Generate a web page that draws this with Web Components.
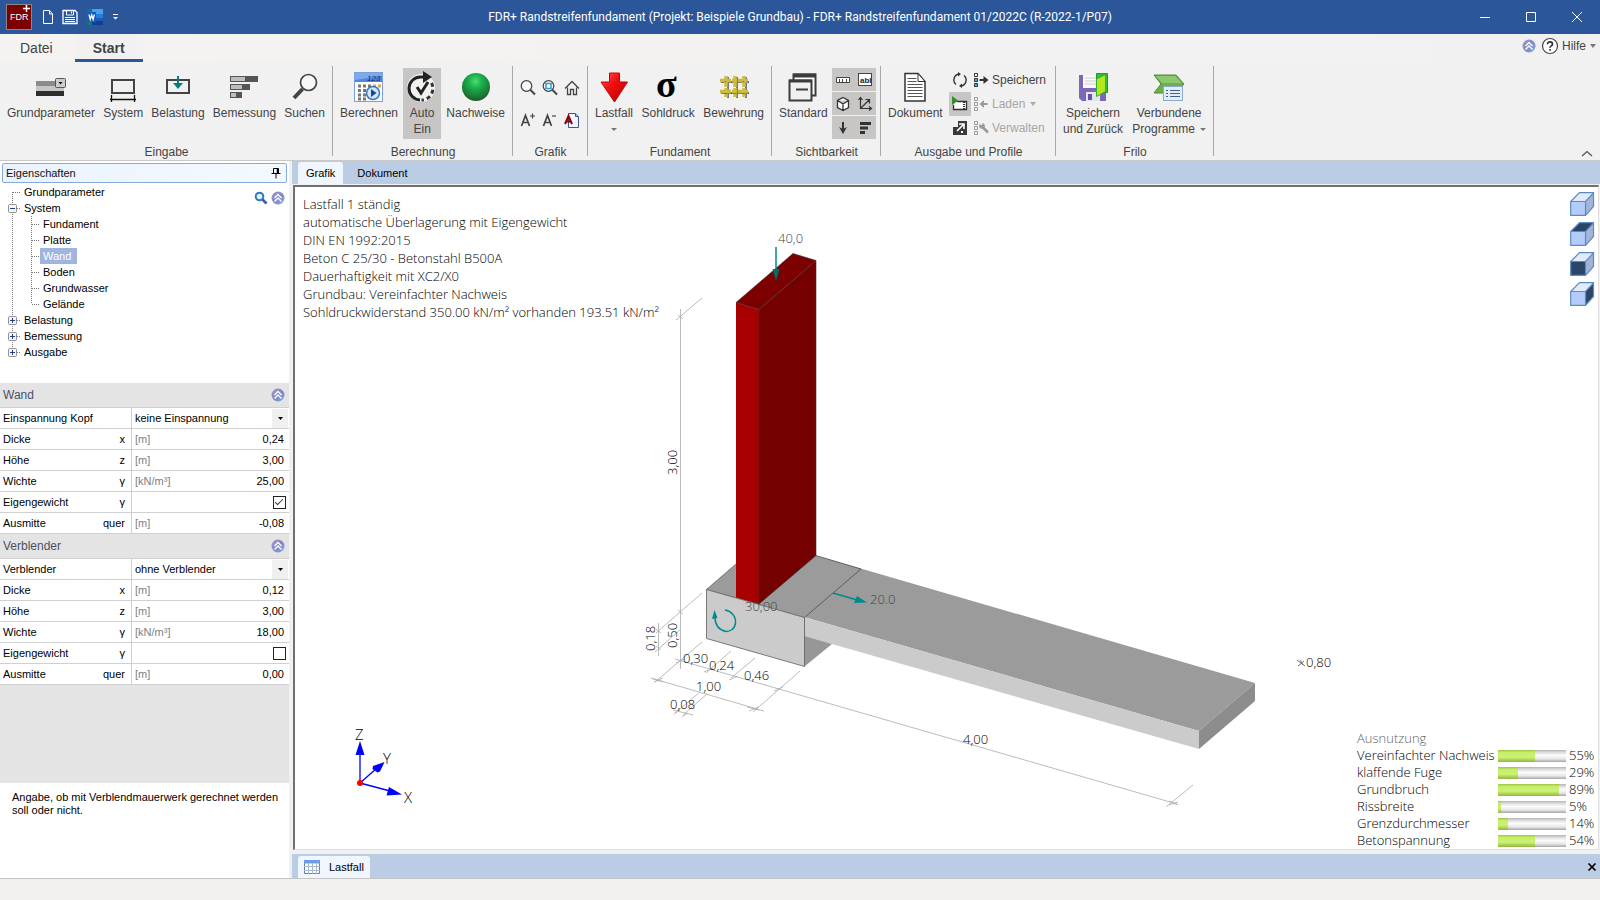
<!DOCTYPE html>
<html lang="de">
<head>
<meta charset="utf-8">
<title>FDR+ Randstreifenfundament</title>
<style>
html, body { height: 100%; margin: 0; }
body { font-family: "Liberation Sans", Arial, sans-serif; font-size: 12px; color: #444; background: #f1f1f1; overflow: hidden; }
</style>
</head>
<body>
<fdr-app></fdr-app>

<script>
// [width, height, markup] of every icon
const ICONS = {
  logo: [26, 26, `<rect x="0.5" y="0.5" width="25" height="25" fill="#7d0000" stroke="#8d8585"/>
    <text x="4" y="16" font-family="Liberation Sans, sans-serif" font-size="9" fill="#fff">FDR</text>
    <path d="M17 4.500h7M20.500 1v7" stroke="#fff" stroke-width="1.500"/>`],
  'new': [12, 16, `<path d="M1.500 1.500h6l3 3.500v9.500h-9zM7.500 1.500v3.500h3" fill="none" stroke="#fff"/>`],
  save: [16, 16, `<path d="M1 1.500h12l2 2v11H1z" fill="none" stroke="#fff" stroke-width="1.300"/><path d="M4.500 2v4h7V2M9.500 2.500v2M3 8.500h10M3 10.500h10M3 12.500h10" fill="none" stroke="#fff"/>`],
  word: [18, 16, `<path d="M5 0h12v5H5z" fill="#41a5ee"/><path d="M5 5h12v4H5z" fill="#2b7cd3"/><path d="M5 9h12v3H5z" fill="#185abd"/><path d="M5 12h12v4H5z" fill="#103f91"/>
    <path d="M1 0h5v3H1zM1 13h5v3H1z" fill="#008080"/><path d="M1 3h9v10H1z" fill="#185abd"/><path d="M3 5.500l1.300 5 1.400-4.500 1.400 4.500 1.300-5" fill="none" stroke="#fff" stroke-width="1.300"/>`],
  customize: [8, 8, `<path d="M1 1.500h5" stroke="#fff"/><path d="M1 4h5L3.500 6.500z" fill="#fff"/>`],
  min: [12, 12, `<path d="M1 6.500h10" stroke="#fff"/>`],
  max: [12, 12, `<path d="M1.500 1.500h9v9h-9z" fill="none" stroke="#fff"/>`],
  close: [12, 12, `<path d="M1 1l10 10M11 1L1 11" stroke="#fff"/>`],
  collapse: [14, 14, `<defs><linearGradient id="g" x2="1" y2="1"><stop offset="0" stop-color="#a39ad0"/><stop offset=".5" stop-color="#8785c4"/><stop offset="1" stop-color="#6fb1e6"/></linearGradient></defs>
    <circle cx="7" cy="7" r="6.500" fill="url(#g)"/><path d="M3.500 7L7 3.500 10.500 7M3.500 10.500L7 7l3.500 3.500" fill="none" stroke="#fff" stroke-width="1.300"/>`],
  help: [18, 18, `<circle cx="9" cy="9" r="7.500" fill="#fff" stroke="#444" stroke-width="1.200"/><path d="M6.500 7.200c0-3.200 5-3 5 0 0 1.700-2.500 1.700-2.500 3.500" fill="none" stroke="#333" stroke-width="1.700"/><rect x="8.200" y="12" width="1.700" height="1.700" fill="#333"/>`],
  up: [12, 8, `<path d="M1 6l5-4.500L11 6" fill="none" stroke="#555" stroke-width="1.300"/>`],
  params: [32, 32, `<path d="M1 10h28v5H1z" fill="#8c8c8c"/><path d="M1 15h28v5H1z" fill="#c6c6c6"/><path d="M1 20h28v5H1z" fill="#2e2e2e"/><rect x="20.500" y="7.500" width="10" height="9" rx="1" fill="#ccc" stroke="#555"/><path d="M23.500 11h4l-2 2.500z" fill="#111"/>`],
  system: [32, 32, `<path d="M5 9h22v13H5z" fill="none" stroke="#444" stroke-width="2"/><path d="M3 28.500h26M4.500 24v7M27.500 24v7" stroke="#111" stroke-width="1.300"/>`],
  load: [32, 32, `<path d="M5 9h22v13H5z" fill="none" stroke="#444" stroke-width="2"/><path d="M16 5v8" stroke="#008080" stroke-width="2"/><path d="M11 12h10l-5 6z" fill="#008080"/>`],
  design: [32, 32, `<path d="M2 5h28v6H2zM2 13h20v6H2zM2 21h12v6H2z" fill="#555"/><path d="M3 6h14v4H3zM3 14h11v4H3zM3 22h5v4H3z" fill="#bdbdbd"/>`],
  search: [32, 32, `<circle cx="19.500" cy="11.500" r="8" fill="#fff" fill-opacity=".5" stroke="#444" stroke-width="1.700"/><path d="M13.500 18L5 27" stroke="#444" stroke-width="4"/>`],
  calc: [32, 32, `<rect x="1.500" y="1.500" width="28" height="29" fill="#fff" stroke="#7ca0dd"/><path d="M2 2h27v9H2z" fill="#4d86dc"/><path d="M2 2h27v3L2 9z" fill="#7caaf0"/>
    <text x="14" y="10" font-family="Liberation Sans, sans-serif" font-size="8" font-style="italic" fill="#152d66">123</text>
    <path d="M5 15h15M5 19.500h15M5 24h10M5 28h10" stroke="#777" stroke-width="3" stroke-dasharray="3 2"/><path d="M20 15h8" stroke="#eda04b" stroke-width="3" stroke-dasharray="3 2"/>
    <circle cx="20" cy="22" r="6.500" fill="#cfe6fb" stroke="#3d78b8" stroke-width="1.500"/><path d="M18 18l5.500 4-5.500 4z" fill="#174a8c"/>`],
  auto: [32, 32, `<circle cx="15" cy="17" r="14" fill="#fff" fill-opacity=".75"/><path d="M14 29A11.500 11.500 0 0 1 15 6h4" fill="none" stroke="#222" stroke-width="3"/><path d="M17 0l9 6-9 6z" fill="#222"/><path d="M25.500 12a11.500 11.500 0 0 1-10 17" fill="none" stroke="#333" stroke-width="3" stroke-dasharray="4 3"/><path d="M11 16l4 6 7-11" fill="none" stroke="#222" stroke-width="3"/>`],
  ball: [32, 32, `<defs><radialGradient id="b" cx=".48" cy=".3" r=".7"><stop offset="0" stop-color="#4fdc6c"/><stop offset=".35" stop-color="#18b14c"/><stop offset=".75" stop-color="#1c7e35"/><stop offset="1" stop-color="#205a2d"/></radialGradient></defs><circle cx="16" cy="16" r="14" fill="url(#b)"/>`],
  zoom: [18, 18, `<circle cx="7.500" cy="7" r="5.300" fill="#fff" fill-opacity=".5" stroke="#444" stroke-width="1.200"/><path d="M11.500 11l4.500 4.500" stroke="#444" stroke-width="2"/>`],
  zoomwin: [18, 18, `<circle cx="7.500" cy="7" r="5.300" fill="#fff" fill-opacity=".5" stroke="#444" stroke-width="1.200"/><path d="M11.500 11l4.500 4.500" stroke="#444" stroke-width="2"/><rect x="5" y="4.500" width="5" height="5" fill="#fff" stroke="#2d9be0" stroke-width="1.500"/>`],
  home: [18, 18, `<path d="M2 9.500L9 2.500l7 7M4.500 8.500v7h3v-5h3v5h3v-7" fill="none" stroke="#444" stroke-width="1.300"/>`],
  fontup: [18, 18, `<path d="M2.500 15L6.500 4.500 10.500 15M4 11.500h5" fill="none" stroke="#444" stroke-width="1.700"/><path d="M11 5h5M13.500 2.500v5" stroke="#444" stroke-width="1.200"/>`],
  fontdown: [18, 18, `<path d="M2.500 15L6.500 4.500 10.500 15M4 11.500h5" fill="none" stroke="#444" stroke-width="1.700"/><path d="M11 5h4" stroke="#444" stroke-width="1.200"/>`],
  fontpage: [18, 18, `<path d="M5.500 2.500h7l3 3v11h-10z" fill="#f2f5fd" stroke="#3b5597"/><path d="M12.500 2.500v3h3" fill="#b9c8ef" stroke="#3b5597"/><path d="M2 13L5.500 5 9 13M3 10.500h5" fill="none" stroke="#900000" stroke-width="2"/>`],
  lastfall: [32, 32, `<defs><linearGradient id="r" x2="1" y2="1"><stop offset="0" stop-color="#ff6060"/><stop offset=".4" stop-color="#f01010"/><stop offset="1" stop-color="#b80000"/></linearGradient></defs><path d="M11.500 2h10v9h8L16.500 31 3 11h8.500z" fill="url(#r)" stroke="#c00"/>`],
  sigma: [32, 32, `<text x="4" y="26" font-family="Liberation Serif, serif" font-size="38" font-weight="bold" fill="#000">σ</text>`],
  rebar: [32, 32, `<path d="M3 11h28M3 22h28" stroke="#6a6a80" stroke-width="2"/><path d="M10 6v21M19 6v21M28 6v21" stroke="#77778a" stroke-width="2"/><path d="M2 9.500h28M2 20.500h28" stroke="#c9b93d" stroke-width="3.500" stroke-dasharray="5 1"/><path d="M8 5v21M17 5v21M26 5v21" stroke="#cdbd45" stroke-width="3.500" stroke-dasharray="5 1"/>`],
  standard: [32, 32, `<path d="M6.500 3.500h22v21h-22z" fill="#fff" stroke="#3c3c3c" stroke-width="2"/><path d="M6 4.500h23" stroke="#3c3c3c" stroke-width="4"/><path d="M2.500 9.500h22v20h-22z" fill="#f1f1f1" stroke="#3c3c3c" stroke-width="2"/><path d="M2 10h23" stroke="#3c3c3c" stroke-width="3"/><path d="M9 18.500h12" stroke="#3c3c3c" stroke-width="2"/>`],
  ruler: [16, 16, `<path d="M1.500 5.500h13v5h-13z" fill="#fff" stroke="#444"/><path d="M4.500 7v3.500M7.500 7v3.500M11.500 7v3.500" stroke="#444"/>`],
  abl: [16, 16, `<rect x="1.500" y="1.500" width="13" height="12" fill="#fff" stroke="#444"/><text x="3" y="11" font-family="Liberation Sans, sans-serif" font-size="8" font-weight="bold" fill="#222">abl</text>`],
  box: [16, 16, `<path d="M8 1.500l5.500 3v7L8 14.500l-5.500-3v-7zM2.500 4.500L8 8l5.500-3.500M8 8v6.500" fill="#fff" stroke="#333" stroke-width="1.300"/>`],
  axes: [16, 16, `<path d="M3.500 2v10.500H14M3.500 12.500L12 4M1.500 4l2-2.500 2 2.500M12 10.500l2.500 2-2.500 2M8.500 3.500H12.500V7.500" fill="none" stroke="#333" stroke-width="1.200"/>`],
  down: [16, 16, `<path d="M8 2v7" stroke="#333" stroke-width="2"/><path d="M4 7l4 2 4-2-4 7z" fill="#333"/>`],
  bars: [16, 16, `<path d="M3 2h11v3H3zM3 6.500h8v3H3zM3 11h5v3H3z" fill="#333"/>`],
  doc: [32, 32, `<path d="M6 2.500h13l7 8v19.500H6z" fill="#fff" stroke="#333" stroke-width="1.500"/><path d="M19 2.500v8h7z" fill="#fff" stroke="#333"/><path d="M8.500 7.500h9M8.500 10.500h9M8.500 13.500h15M8.500 16.500h15M8.500 19.500h15M8.500 22.500h15M8.500 25.500h15" stroke="#555" stroke-width="1.200"/>`],
  refresh: [16, 16, `<path d="M7 2A6 6 0 0 0 4 12.500M9 14a6 6 0 0 0 3-10.500" fill="none" stroke="#333" stroke-width="1.400"/><path d="M6 0l3 2-3 2.500zM10 16l-3-2 3-2.500z" fill="#333"/>`],
  film: [18, 16, `<path d="M6 5.500h9.500v8h-13V9" fill="#fff" stroke="#333" stroke-width="1.300"/><path d="M13 6v8" stroke="#333" stroke-width="2" stroke-dasharray="1 1"/><path d="M1 0l6 4.500L1 9z" fill="#2f8f2f"/>`],
  expand: [16, 16, `<path d="M1 1h14v14H1z" fill="#3a3a3a"/><path d="M1 1h5v6H1z" fill="#f1f1f1"/><path d="M5 11l6-6M7 4h5v5" fill="none" stroke="#fff" stroke-width="1.600"/><path d="M9 11h2v2H9z" fill="#fff"/>`],
  psave: [16, 16, `<path d="M1.500 1.500h3v3h-3zM1.500 6.500h3v3h-3zM1.500 11.500h3v3h-3z" fill="#4bb0e8" stroke="#333"/><path d="M2 2h2v2H2z" fill="#fff"/><path d="M6.500 8h6" stroke="#333" stroke-width="2"/><path d="M10.500 4l5 4-5 4z" fill="#333"/>`],
  pload: [16, 16, `<path d="M1.500 1.500h3v3h-3zM1.500 6.500h3v3h-3zM1.500 11.500h3v3h-3z" fill="#f4f4f4" stroke="#999"/><path d="M9.500 8h5" stroke="#999" stroke-width="2"/><path d="M11 4L6.500 8l4.500 4z" fill="#999"/>`],
  pmanage: [16, 16, `<path d="M1.500 1.500h3v3h-3zM1.500 6.500h3v3h-3zM1.500 11.500h3v3h-3z" fill="#f4f4f4" stroke="#999"/><path d="M9 6.500l6 6" stroke="#999" stroke-width="2.500"/><circle cx="9" cy="6" r="2.800" fill="#999"/><path d="M6 3.500l3 2 .5-3z" fill="#f1f1f1"/>`],
  saveback: [32, 32, `<path d="M2 4h27v26H5l-3-3z" fill="#7b68b8"/><path d="M6 4h17v13H6z" fill="#fafafa"/><path d="M8 7h13M8 10h13M8 13h13" stroke="#ccc"/><path d="M9 21h14v9H9z" fill="#e4e4ea"/><path d="M11 23h4v6h-4z" fill="#6652a5"/><path d="M19.500 2.500h11v19h-11z" fill="#2fbf3c" stroke="#1c9d2c"/><path d="M19.500 8l9-4.500v17l-9 5z" fill="#b6e61e" stroke="#30b030"/>`],
  linked: [32, 32, `<path d="M1 4h22l8 9-8 9H1l7-9z" fill="#6bb04c" stroke="#4c8a34"/><path d="M3 5h19l7 7H9z" fill="#8cc870"/><rect x="10.500" y="15.500" width="19" height="14" fill="#e3edf9" stroke="#8ba9cc"/><path d="M13 19.500h2M17 19.500h10M13 22.500h2M17 22.500h10M13 25.500h2M17 25.500h10" stroke="#3d5f93"/>`],
  pin: [12, 12, `<path d="M3.500 1.500h5v5h-5zM1.500 6.500h9M6 7v4.500" fill="none" stroke="#000"/><path d="M7.500 1v5" stroke="#000" stroke-width="1.500"/>`],
  find: [14, 14, `<circle cx="5.500" cy="5.500" r="3.800" fill="#e4f1fb" stroke="#2a7cc4" stroke-width="2"/><path d="M8.500 8.500l4 4" stroke="#3760a8" stroke-width="2.600"/>`],
  table: [16, 14, `<path d="M0.500 0.500h15v13h-15z" fill="#fff" stroke="#5b7fae"/><path d="M0 0h16v3.500H0z" fill="#6f9de0"/><path d="M4.500 3v11M8.500 3v11M12.500 3v11M0 6.500h16M0 10.500h16" stroke="#a9b9d0"/>`],
  x: [10, 10, `<path d="M1.500 1.500l7 7M8.500 1.500l-7 7" stroke="#000" stroke-width="1.700"/>`],
};

function cube(top, front, side) {
  return [24, 24, `<path d="M0.700 9.500L9.500 1h14L15.500 9.500z" fill="${top}"/><path d="M0.700 9.500h14.800v13.800H0.700z" fill="${front}"/><path d="M15.500 9.500L23.500 1v13.500l-8 8.800z" fill="${side}"/>
    <path d="M0.700 9.500L9.500 0.700h14v13.800l-8 8.800H0.700zM0.700 9.500h14.800l8-8.500M15.500 9.500v13.800" fill="none" stroke="#5b8ac8" stroke-width="1.200"/>`];
}
ICONS.cube0 = cube('#e3ebfb', '#b4ccfb', '#a4b4d6');
ICONS.cubeTop = cube('#2b4568', '#b4ccfb', '#a4b4d6');
ICONS.cubeFront = cube('#e3ebfb', '#2b4568', '#a4b4d6');
ICONS.cubeSide = cube('#e3ebfb', '#b4ccfb', '#2b4568');

class BaseElement extends HTMLElement {
  constructor() {
    super();
    this.attachShadow({ mode: 'open' });
  }

  attr(name, fallback = '') {
    return this.getAttribute(name) || fallback;
  }

  connectedCallback() {
    this.shadowRoot.innerHTML = this.render();
  }
}

class FdrIcon extends BaseElement {
  render() {
    const [w, h, body] = ICONS[this.attr('name')];
    return `<style>:host { display: inline-flex; flex: none; } svg { display: block; overflow: visible; }</style>
      <svg width="${w}" height="${h}" viewBox="0 0 ${w} ${h}" aria-hidden="true">${body}</svg>`;
  }
}

class TitleBar extends BaseElement {
  render() {
    return `<style>
      :host { display: grid; grid-template-columns: 1fr auto 1fr; align-items: center; height: 34px; background: #2b579a; color: #fff; }
      .quick { display: flex; align-items: center; gap: 8px; padding-left: 6px; }
      .quick fdr-icon[name=logo] { margin-right: 2px; }
      .title { font: 12px Roboto, sans-serif; }
      .window { display: flex; justify-content: flex-end; }
      button { display: flex; align-items: center; justify-content: center; border: 0; padding: 0; background: none; }
      .window button { width: 46px; height: 34px; }
      </style>
      <div class="quick">
        <fdr-icon name="logo"></fdr-icon>
        <button aria-label="Neu"><fdr-icon name="new"></fdr-icon></button>
        <button aria-label="Speichern"><fdr-icon name="save"></fdr-icon></button>
        <button aria-label="Word"><fdr-icon name="word"></fdr-icon></button>
        <button aria-label="Anpassen"><fdr-icon name="customize"></fdr-icon></button>
      </div>
      <div class="title"><slot></slot></div>
      <div class="window">
        <button aria-label="Minimieren"><fdr-icon name="min"></fdr-icon></button>
        <button aria-label="Maximieren"><fdr-icon name="max"></fdr-icon></button>
        <button aria-label="Schließen"><fdr-icon name="close"></fdr-icon></button>
      </div>`;
  }
}

class MenuTabs extends BaseElement {
  render() {
    return `<style>
      :host { display: flex; justify-content: space-between; height: 28px; background: linear-gradient(90deg, #f5f3f1, #f1f1f1 90%); }
      nav, .help { display: flex; }
      nav { padding-left: 12px; gap: 14px; }
      nav button { font: 14px "Liberation Sans", sans-serif; border-bottom: 3px solid transparent; padding: 2px 8px 0; }
      button { color: #444; background: none; border: 0; }
      .active { width: 68px; font-weight: bold; border-color: #2b579a; background: #f1f1f1; }
      .help { align-items: center; align-self: flex-start; height: 24px; gap: 5px; padding-right: 4px; }
      .help button { display: flex; align-items: center; gap: 3px; padding: 0; font: 12px "Liberation Sans", sans-serif; }
      .caret { border: 3px solid transparent; border-top: 4px solid #777; border-bottom: 0; margin-left: 1px; }
      </style>
      <nav><button>Datei</button><button class="active">Start</button></nav>
      <div class="help">
        <button aria-label="Einklappen"><fdr-icon name="collapse"></fdr-icon></button>
        <button><fdr-icon name="help"></fdr-icon>Hilfe<span class="caret"></span></button>
      </div>`;
  }
}

class RibbonGroup extends BaseElement {
  render() {
    return `<style>
      :host { display: flex; flex-direction: column; justify-content: space-between; flex: none; box-sizing: border-box; width: var(--group-width);
        background: linear-gradient(#a8a8a8, #a8a8a8) right 4px / 1px 90px no-repeat; }
      .items { display: flex; justify-content: var(--group-justify, space-between); padding: 6px 8px 0 7px; }
      .caption { text-align: center; line-height: 16px; }
      </style>
      <div class="items"><slot></slot></div>
      <div class="caption">${this.attr('caption')}</div>`;
  }
}

class RibbonButton extends BaseElement {
  render() {
    const lines = this.attr('label').split('|');
    const caret = this.hasAttribute('menu') ? '<i></i>' : '';
    return `<style>
      :host { display: block; }
      button { display: flex; flex-direction: column; align-items: center; height: 71px; padding: 3px 0 0; border: 0; background: none; font: 12px/16px "Liberation Sans", sans-serif; color: #444; white-space: nowrap; }
      button.on { width: 38px; background: #c8c6c4; }
      fdr-icon { margin-bottom: 2px; }
      span { display: flex; align-items: center; gap: 5px; min-height: 16px; }
      i { border: 3px solid transparent; border-top: 3px solid #777; border-bottom: 0; }
      </style>
      <button class="${this.hasAttribute('on') ? 'on' : ''}">
        <fdr-icon name="${this.attr('icon')}"></fdr-icon>
        ${lines.map((line, i) => `<span>${line}${i == lines.length - 1 ? caret : ''}</span>`).join('')}
      </button>`;
  }
}

class IconButton extends BaseElement {
  render() {
    return `<style>
      :host { display: block; }
      button { display: flex; align-items: center; justify-content: center; width: 22px; height: var(--icon-button-height, 24px); padding: 0; border: 0; background: none; }
      :host([on]) button { background: #c8c6c4; }
      </style>
      <button aria-label="${this.attr('label')}"><fdr-icon name="${this.attr('icon')}"></fdr-icon></button>`;
  }
}

class ProfileButton extends BaseElement {
  render() {
    return `<style>
      :host { display: block; }
      button { display: flex; align-items: center; gap: 3px; height: 24px; padding: 0; border: 0; background: none; font: 12px "Liberation Sans", sans-serif; color: #444; }
      button:disabled { color: #a6a6a6; }
      i { border: 3px solid transparent; border-top: 4px solid #aaa; border-bottom: 0; margin-left: 2px; }
      </style>
      <button ${this.hasAttribute('disabled') ? 'disabled' : ''}><fdr-icon name="${this.attr('icon')}"></fdr-icon><slot></slot>${this.hasAttribute('menu') ? '<i></i>' : ''}</button>`;
  }
}

class AppRibbon extends BaseElement {
  render() {
    return `<style>
      :host { display: flex; height: 98px; background: #f1f1f1; border-bottom: 1px solid #c8c8c8; }
      .grid { display: grid; }
      .zoom { grid-template-columns: repeat(3, 22px); row-gap: 8px; padding-top: 8px; }
      .toggles { grid-template-columns: 22px 22px; row-gap: 1px; margin-right: -3px; --icon-button-height: 23px; }
      .profile { grid-template-columns: 22px auto; column-gap: 2px; margin-right: 2px; }
      .end { flex: 1; display: flex; justify-content: flex-end; align-items: flex-end; padding: 0 7px 2px 0; }
      .end button { display: flex; border: 0; padding: 0; background: none; }
      </style>
      <ribbon-group caption="Eingabe" style="--group-width: 333px">
        <ribbon-button icon="params" label="Grundparameter"></ribbon-button>
        <ribbon-button icon="system" label="System"></ribbon-button>
        <ribbon-button icon="load" label="Belastung"></ribbon-button>
        <ribbon-button icon="design" label="Bemessung"></ribbon-button>
        <ribbon-button icon="search" label="Suchen"></ribbon-button>
      </ribbon-group>
      <ribbon-group caption="Berechnung" style="--group-width: 180px">
        <ribbon-button icon="calc" label="Berechnen"></ribbon-button>
        <ribbon-button icon="auto" label="Auto|Ein" on></ribbon-button>
        <ribbon-button icon="ball" label="Nachweise"></ribbon-button>
      </ribbon-group>
      <ribbon-group caption="Grafik" style="--group-width: 75px; --group-justify: center">
        <div class="grid zoom">
          <icon-button icon="zoom" label="Zoom"></icon-button>
          <icon-button icon="zoomwin" label="Zoom Fenster"></icon-button>
          <icon-button icon="home" label="Alles"></icon-button>
          <icon-button icon="fontup" label="Schrift größer"></icon-button>
          <icon-button icon="fontdown" label="Schrift kleiner"></icon-button>
          <icon-button icon="fontpage" label="Schrift Dokument"></icon-button>
        </div>
      </ribbon-group>
      <ribbon-group caption="Fundament" style="--group-width: 184px">
        <ribbon-button icon="lastfall" label="Lastfall|" menu></ribbon-button>
        <ribbon-button icon="sigma" label="Sohldruck"></ribbon-button>
        <ribbon-button icon="rebar" label="Bewehrung"></ribbon-button>
      </ribbon-group>
      <ribbon-group caption="Sichtbarkeit" style="--group-width: 109px">
        <ribbon-button icon="standard" label="Standard"></ribbon-button>
        <div class="grid toggles">
          <icon-button on icon="ruler" label="Maße"></icon-button>
          <icon-button on icon="abl" label="Texte"></icon-button>
          <icon-button on icon="box" label="Körper"></icon-button>
          <icon-button on icon="axes" label="Achsen"></icon-button>
          <icon-button on icon="down" label="Lasten"></icon-button>
          <icon-button on icon="bars" label="Ausnutzung"></icon-button>
        </div>
      </ribbon-group>
      <ribbon-group caption="Ausgabe und Profile" style="--group-width: 175px">
        <ribbon-button icon="doc" label="Dokument"></ribbon-button>
        <div class="grid profile">
          <icon-button icon="refresh" label="Aktualisieren"></icon-button>
          <profile-button icon="psave">Speichern</profile-button>
          <icon-button on icon="film" label="Vorschau"></icon-button>
          <profile-button icon="pload" disabled menu>Laden</profile-button>
          <icon-button icon="expand" label="Vergrößern"></icon-button>
          <profile-button icon="pmanage" disabled>Verwalten</profile-button>
        </div>
      </ribbon-group>
      <ribbon-group caption="Frilo" style="--group-width: 158px">
        <ribbon-button icon="saveback" label="Speichern|und Zurück"></ribbon-button>
        <ribbon-button icon="linked" label="Verbundene|Programme" menu></ribbon-button>
      </ribbon-group>
      <div class="end"><button aria-label="Menüband einklappen"><fdr-icon name="up"></fdr-icon></button></div>`;
  }
}

class TreeView extends BaseElement {
  // level 1 lines run at x = 12, level 2 lines at x = 31
  lines(item, i, items) {
    const w = item.level == 1 ? 21 : 40;
    const last = i == items.length - 1;
    const dots = 'stroke="#777" stroke-dasharray="1 1"';
    let s = `<path d="M12.5 ${i == 0 ? 8 : 0}V${last ? 8 : 16}" ${dots}/>`;
    if (item.level == 1) {
      s += `<path d="M13 8.500H21" ${dots}/>`;
      if (item.state) {
        s += `<rect x="8.500" y="4.500" width="8" height="8" rx="1" fill="#f6f6f6" stroke="#919191"/><path d="M10 8.500h5${item.state == '+' ? 'M12.500 6v5' : ''}" stroke="#1f3f8f"/>`;
      }
    } else {
      const lastChild = items[i + 1].level == 1;
      s += `<path d="M31.500 0V${lastChild ? 8 : 16}M32 8.500H40" ${dots}/>`;
    }
    return `<svg width="${w}" height="16" aria-hidden="true">${s}</svg>`;
  }

  render() {
    const items = [
      { level: 1, text: 'Grundparameter' },
      { level: 1, text: 'System', state: '-' },
      { level: 2, text: 'Fundament' },
      { level: 2, text: 'Platte' },
      { level: 2, text: 'Wand', selected: true },
      { level: 2, text: 'Boden' },
      { level: 2, text: 'Grundwasser' },
      { level: 2, text: 'Gelände' },
      { level: 1, text: 'Belastung', state: '+' },
      { level: 1, text: 'Bemessung', state: '+' },
      { level: 1, text: 'Ausgabe', state: '+' },
    ];
    return `<style>
      :host { display: flex; justify-content: space-between; height: 199px; background: #fff; color: #000; }
      ul { list-style: none; margin: 0; padding: 0; }
      li { display: flex; height: 16px; line-height: 16px; }
      li span { padding: 0 6px 0 3px; }
      li[aria-selected=true] span { background: #9fb5df; color: #fff; }
      .tools { display: flex; align-items: flex-start; gap: 3px; padding: 7px 4px; }
      button { display: flex; padding: 0; border: 0; background: none; }
      </style>
      <ul role="tree">${items.map((item, i) => `<li role="treeitem" aria-selected="${!!item.selected}">${this.lines(item, i, items)}<span>${item.text}</span></li>`).join('')}</ul>
      <div class="tools">
        <button aria-label="Suchen"><fdr-icon name="find"></fdr-icon></button>
        <button aria-label="Einklappen"><fdr-icon name="collapse"></fdr-icon></button>
      </div>`;
  }
}

class PropertySection extends BaseElement {
  render() {
    return `<style>
      :host { display: block; }
      header { display: flex; align-items: center; justify-content: space-between; box-sizing: border-box; height: 25px; padding: 0 4px 0 3px; background: #e4e4e4; border-bottom: 1px solid #d0d0d0; font-size: 12px; color: #4c4f66; }
      button { display: flex; padding: 0; border: 0; background: none; }
      </style>
      <header>${this.attr('caption')}<button aria-label="Einklappen"><fdr-icon name="collapse"></fdr-icon></button></header>
      <slot></slot>`;
  }
}

class PropertyRow extends BaseElement {
  control() {
    const value = this.attr('value');
    switch (this.attr('type', 'number')) {
      case 'select':
        return `<select id="field"><option>${value}</option></select><i><svg width="5" height="3"><path d="M0 0h5L2.500 3z"/></svg></i>`;
      case 'checkbox':
        return `<input id="field" type="checkbox" ${value ? 'checked' : ''}>`;
      default:
        return `<span class="unit">[${this.attr('unit')}]</span><input id="field" type="text" value="${value}">`;
    }
  }

  render() {
    return `<style>
      :host { display: grid; grid-template-columns: 132px 1fr; height: 20px; background: #fff; border-bottom: 1px solid #d0d0d0; color: #000; }
      label { display: flex; align-items: center; justify-content: space-between; padding: 0 6px 0 3px; border-right: 1px solid #d0d0d0; }
      .cell { display: flex; align-items: center; min-width: 0; padding-left: 3px; }
      .unit { color: #808080; }
      input, select { flex: 1; min-width: 0; height: 19px; padding: 0; border: 0; background: none; color: #000; font: 11px "Liberation Sans", sans-serif; }
      input[type=text] { text-align: right; padding-right: 5px; }
      select { appearance: none; }
      i { display: flex; align-items: center; justify-content: center; width: 16px; height: 19px; margin-right: 1px; background: #f0f0f0; }
      input[type=checkbox] { appearance: none; flex: none; width: 13px; height: 13px; margin: 0 3px 0 auto; border: 1px solid #222; background: #fff; }
      input[type=checkbox]:checked::before { content: ""; display: block; width: 7px; height: 3px; margin: 2px 1px; border: solid #333; border-width: 0 0 1px 1px; transform: rotate(-45deg); }
      </style>
      <label for="field"><span>${this.attr('label')}</span><span>${this.attr('symbol')}</span></label>
      <div class="cell">${this.control()}</div>`;
  }
}

class SidePanel extends BaseElement {
  render() {
    return `<style>
      :host { display: flex; flex-direction: column; width: 289px; font-size: 11px; background: #fff; }
      .head { display: flex; align-items: center; justify-content: space-between; box-sizing: border-box; height: 20px; margin: 2px 2px 1px; padding: 0 4px 0 3px; border: 1px solid #84abe0; border-radius: 2px; background: linear-gradient(90deg, #eaf3fd, #f4f9ff); color: #111; }
      .head button { display: flex; padding: 0; border: 0; background: none; }
      .rest { flex: 1; background: #e4e4e4; }
      .hint { box-sizing: border-box; height: 95px; margin: 0; padding: 8px 4px 8px 12px; line-height: 13px; color: #000; }
      </style>
      <div class="head">Eigenschaften<button aria-label="Anheften"><fdr-icon name="pin"></fdr-icon></button></div>
      <tree-view></tree-view>
      <property-section caption="Wand">
        <property-row label="Einspannung Kopf" type="select" value="keine Einspannung"></property-row>
        <property-row label="Dicke" symbol="x" unit="m" value="0,24"></property-row>
        <property-row label="Höhe" symbol="z" unit="m" value="3,00"></property-row>
        <property-row label="Wichte" symbol="γ" unit="kN/m³" value="25,00"></property-row>
        <property-row label="Eigengewicht" symbol="γ" type="checkbox" value="1"></property-row>
        <property-row label="Ausmitte" symbol="quer" unit="m" value="-0,08"></property-row>
      </property-section>
      <property-section caption="Verblender">
        <property-row label="Verblender" type="select" value="ohne Verblender"></property-row>
        <property-row label="Dicke" symbol="x" unit="m" value="0,12"></property-row>
        <property-row label="Höhe" symbol="z" unit="m" value="3,00"></property-row>
        <property-row label="Wichte" symbol="γ" unit="kN/m³" value="18,00"></property-row>
        <property-row label="Eigengewicht" symbol="γ" type="checkbox"></property-row>
        <property-row label="Ausmitte" symbol="quer" unit="m" value="0,00"></property-row>
      </property-section>
      <div class="rest"></div>
      <p class="hint">Angabe, ob mit Verblendmauerwerk gerechnet werden soll oder nicht.</p>`;
  }
}

class UsageList extends BaseElement {
  render() {
    const rows = [
      ['Vereinfachter Nachweis', 55],
      ['klaffende Fuge', 29],
      ['Grundbruch', 89],
      ['Rissbreite', 5],
      ['Grenzdurchmesser', 14],
      ['Betonspannung', 54],
    ];
    return `<style>
      :host { display: grid; grid-template-columns: 138px 68px 26px; column-gap: 3px; line-height: 17px; white-space: nowrap; }
      h2 { grid-column: 1 / -1; margin: 0; font: inherit; color: #666; }
      .bar { align-self: center; height: 12px; background: linear-gradient(#b4b4b4, #dcdcdc 20%, #fcfcfc 45%, #e6e6e6 75%, #a4a4a4); }
      .bar div { height: 100%; background: linear-gradient(#9fc446, #c6ec6a 20%, #ccf276 60%, #94b540); }
      </style>
      <h2>Ausnutzung</h2>
      ${rows.map(([name, v]) => `<span>${name}</span>
        <div class="bar" role="meter" aria-label="${name}" aria-valuenow="${v}"><div style="width: ${v}%"></div></div>
        <span>${v}%</span>`).join('')}`;
  }
}

class FoundationScene extends BaseElement {
  render() {
    return `<style>
      :host { display: block; }
      svg { display: block; width: 100%; height: 100%; font-size: 13px; }
      .dim path { fill: none; stroke: #aaa; stroke-width: 0.8; }
      .edge { fill: none; stroke: #333; stroke-width: 0.6; }
      .teal { fill: none; stroke: #008b8b; stroke-width: 1.500; }
      .axes { font-size: 15px; }
      </style>
      <svg role="img" aria-label="Fundament">
        <g transform="translate(-295 -187)">
          <!-- plate -->
          <path d="M804 617L816 555.500 1255 683 1199 731z" fill="#9b9b9b"/>
          <path d="M804 617L1199 731V749L804 636z" fill="#cbcbcb"/>
          <path d="M1199 731L1255 683V701L1199 749z" fill="#8c8c8c"/>
          <!-- strip footing -->
          <path d="M804.500 636V666.500L832 644z" fill="#979797"/>
          <path d="M706.500 589.500L763 541 861 569 804.500 617.500z" fill="#9b9b9b"/>
          <path d="M706.500 589.500L804.500 617.500V666.500L706.500 638.500z" fill="#cbcbcb"/>
          <path class="edge" d="M706.500 589.500L736 564M816 555.500L861 569 804.500 617.500M706.500 589.500L804.500 617.500V666.500L706.500 638.500z"/>
          <!-- wall -->
          <path d="M736 302.500L793 253.500 816 260.500 759 309.500z" fill="#7c0000"/>
          <path d="M736 302.500L759 309.500V604L736 597.500z" fill="#a80000"/>
          <path d="M759 309.500L816 260.500V555.500L759 604z" fill="#740000"/>
          <path class="edge" d="M736 302.500L793 253.500 816 260.500V555.500M736 302.500L759 309.500 816 260.500M759 309.500V604L816 555.500"/>
          <!-- loads -->
          <path class="teal" d="M776 247V272"/><path d="M772.500 269H779.500L776 281z" fill="#006d6d"/>
          <path class="teal" d="M833 593L857 600"/><path d="M857 596L867 602.500 854 603z" fill="#008b8b"/>
          <path class="teal" d="M725 610C731 611 736 616 735.500 623 735 629 730 631.500 726 631.500 719 630 715 625 715 617" />
          <path d="M714.500 610L712 619 717.500 618z" fill="#008b8b"/>
          <g fill="#444"><text x="778" y="243">40,0</text><text x="870" y="604">20.0</text><text x="745" y="611">30,00</text></g>
          <!-- dimension chains -->
          <g class="dim">
            <path d="M680.500 309V669" stroke-width="1.500"/>
            <path d="M676 320L702 298M678 315l5 4M702 593L656 633M678 610l5 4M658.500 623V656M680 630L655 652M656 629l5 4M656 646l5 4"/>
            <path d="M702 642L655 682M675 659L1177 804M651 678L764 711M731 651L706 673M755 658L731 678M800 671L753 712"/>
            <path d="M676 663l9-4M704 672l9-4M729 680l9-4M774 691l9-4M654 682l9-4M749 711l10-4M653 679l10 3M747 707l12 3"/>
            <path d="M700 692L675 713M707 694L683 715M673 710L693 715M674 714l6-4M682 717l6-4M1193 785L1166 807M1169 805l9-3M1169 801l9 4"/>
          </g>
          <path d="M1297 660l8 6M1298 666l6-5M1300 660l3 5" fill="none" stroke="#555" stroke-width="0.800"/>
          <g fill="#000">
            <text x="683" y="663">0,30</text><text x="709" y="670">0,24</text><text x="744" y="680">0,46</text>
            <text x="696" y="691">1,00</text><text x="670" y="709">0,08</text><text x="963" y="744">4,00</text><text x="1306" y="667">0,80</text>
            <text transform="translate(655 651) rotate(-90)">0,18</text>
            <text transform="translate(677 648) rotate(-90)">0,50</text>
            <text transform="translate(677 475) rotate(-90)">3,00</text>
          </g>
          <!-- axis cross -->
          <g class="axes">
            <path d="M360 783V752M360 783L377 768M360 783L390 791" stroke="#00f" stroke-width="1.300"/>
            <path d="M360 741L364.500 755H355.500zM384.500 762L373 766 372.500 769 377.500 772.500 380 771.500zM402 794.500L389 787 386.500 795.500z" fill="#00f"/>
            <circle cx="360" cy="783" r="3" fill="#f00"/>
            <text x="355" y="740">Z</text><text x="383" y="764">Y</text><text x="404" y="803">X</text>
          </g>
        </g>
      </svg>`;
  }
}

class GraphicView extends BaseElement {
  render() {
    return `<style>
      :host { position: relative; display: grid; grid-template-columns: 1fr auto; grid-template-rows: auto 1fr; box-sizing: border-box; margin: 1px 1px 4px 1px; background: #fff;
        border: 1px solid #e0e0e0; border-top: 2px solid #707070; border-left: 2px solid #707070; font-family: "Open Sans", "Noto Sans", sans-serif; font-weight: 300; font-size: 13px; color: #000; }
      foundation-scene { position: absolute; inset: 0; }
      .info { grid-row: 1 / 3; padding: 8px; line-height: 18px; }
      .views { display: grid; justify-self: end; gap: 6px; padding: 5px 4px; }
      .views button { display: flex; padding: 0; border: 0; background: none; }
      usage-list { grid-column: 2; align-self: end; justify-self: end; padding-right: 3px; }
      .views, .info, usage-list { position: relative; }
      </style>
      <foundation-scene></foundation-scene>
      <div class="info">
        <div>Lastfall 1 ständig</div>
        <div>automatische Überlagerung mit Eigengewicht</div>
        <div>DIN EN 1992:2015</div>
        <div>Beton C 25/30 - Betonstahl B500A</div>
        <div>Dauerhaftigkeit mit XC2/X0</div>
        <div>Grundbau: Vereinfachter Nachweis</div>
        <div>Sohldruckwiderstand 350.00 kN/m² vorhanden 193.51 kN/m²</div>
      </div>
      <div class="views">
        <button aria-label="Isometrie"><fdr-icon name="cube0"></fdr-icon></button>
        <button aria-label="Draufsicht"><fdr-icon name="cubeTop"></fdr-icon></button>
        <button aria-label="Vorderansicht"><fdr-icon name="cubeFront"></fdr-icon></button>
        <button aria-label="Seitenansicht"><fdr-icon name="cubeSide"></fdr-icon></button>
      </div>
      <usage-list></usage-list>`;
  }
}

class FdrApp extends BaseElement {
  render() {
    return `<style>
      :host { display: flex; flex-direction: column; height: 100vh; }
      main { flex: 1; display: flex; gap: 3px; min-height: 0; }
      .work { flex: 1; display: flex; flex-direction: column; min-width: 0; }
      graphic-view { flex: 1; }
      .tabs { display: flex; align-items: flex-end; height: 23px; padding: 0 3px 0 6px; background: #bbcde5; }
      .tabs.bottom { height: 24px; }
      .tabs button { display: flex; align-items: center; height: 22px; gap: 9px; padding: 0 8px; border: 0; border-radius: 3px 3px 0 0; background: none; font: 11px "Liberation Sans", sans-serif; color: #000; }
      .tabs .active { background: #f0f6fe; }
      .tabs .doc { margin-left: 6px; }
      .bottom .active { padding: 0 6px; }
      .tabs .close { margin-left: auto; padding: 0; }
      footer { height: 21px; background: #f2f1f0; border-top: 1px solid #c4c4c4; }
      </style>
      <title-bar>FDR+ Randstreifenfundament (Projekt: Beispiele Grundbau) - FDR+ Randstreifenfundament 01/2022C (R-2022-1/P07)</title-bar>
      <menu-tabs></menu-tabs>
      <app-ribbon></app-ribbon>
      <main>
        <side-panel></side-panel>
        <div class="work">
          <div class="tabs"><button class="active">Grafik</button><button class="doc">Dokument</button></div>
          <graphic-view></graphic-view>
          <div class="tabs bottom"><button class="active"><fdr-icon name="table"></fdr-icon>Lastfall</button><button class="close" aria-label="Schließen"><fdr-icon name="x"></fdr-icon></button></div>
        </div>
      </main>
      <footer></footer>`;
  }
}

customElements.define('fdr-icon', FdrIcon);
customElements.define('title-bar', TitleBar);
customElements.define('menu-tabs', MenuTabs);
customElements.define('ribbon-group', RibbonGroup);
customElements.define('ribbon-button', RibbonButton);
customElements.define('icon-button', IconButton);
customElements.define('profile-button', ProfileButton);
customElements.define('app-ribbon', AppRibbon);
customElements.define('tree-view', TreeView);
customElements.define('property-section', PropertySection);
customElements.define('property-row', PropertyRow);
customElements.define('side-panel', SidePanel);
customElements.define('usage-list', UsageList);
customElements.define('foundation-scene', FoundationScene);
customElements.define('graphic-view', GraphicView);
customElements.define('fdr-app', FdrApp);
</script>
</body>
</html>
